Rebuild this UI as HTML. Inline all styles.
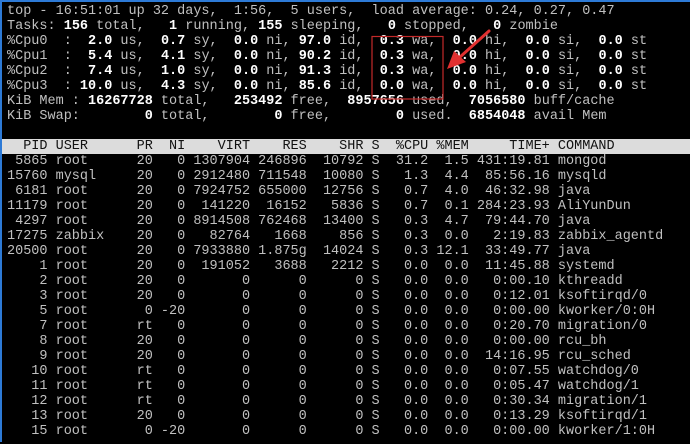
<!DOCTYPE html>
<html><head><meta charset="utf-8"><style>
html,body{margin:0;padding:0;background:#000;}
body{width:690px;height:442px;overflow:hidden;position:relative;border-top:2px solid #2d7ad6;border-left:2px solid #2d7ad6;box-sizing:border-box;}
#t{position:absolute;left:3px;top:2px;font-family:"Liberation Mono",monospace;font-size:13.5px;line-height:15px;color:#c0c0c0;white-space:pre;}
#t div{height:15px;padding-left:2px;}
b{color:#fff;font-weight:bold;}
#t .h{background:#dcdcdc;color:#111;width:700px;margin-left:-3px;padding-left:5px;}
svg{position:absolute;left:0;top:0;}
</style></head><body>
<div id="t"><div>top - 16:51:01 up 32 days,  1:56,  5 users,  load average: 0.24, 0.27, 0.47</div><div>Tasks: <b>156</b> total,   <b>1</b> running, <b>155</b> sleeping,   <b>0</b> stopped,   <b>0</b> zombie</div><div>%Cpu0  : <b> 2.0</b> us, <b> 0.7</b> sy, <b> 0.0</b> ni, <b>97.0</b> id, <b> 0.3</b> wa, <b> 0.0</b> hi, <b> 0.0</b> si, <b> 0.0</b> st</div><div>%Cpu1  : <b> 5.4</b> us, <b> 4.1</b> sy, <b> 0.0</b> ni, <b>90.2</b> id, <b> 0.3</b> wa, <b> 0.0</b> hi, <b> 0.0</b> si, <b> 0.0</b> st</div><div>%Cpu2  : <b> 7.4</b> us, <b> 1.0</b> sy, <b> 0.0</b> ni, <b>91.3</b> id, <b> 0.3</b> wa, <b> 0.0</b> hi, <b> 0.0</b> si, <b> 0.0</b> st</div><div>%Cpu3  : <b>10.0</b> us, <b> 4.3</b> sy, <b> 0.0</b> ni, <b>85.6</b> id, <b> 0.0</b> wa, <b> 0.0</b> hi, <b> 0.0</b> si, <b> 0.0</b> st</div><div>KiB Mem : <b>16267728</b> total, <b>  253492</b> free, <b> 8957656</b> used, <b> 7056580</b> buff/cache</div><div>KiB Swap: <b>       0</b> total, <b>       0</b> free, <b>       0</b> used. <b> 6854048</b> avail Mem</div><div> </div><div class="h">  PID USER      PR  NI    VIRT    RES    SHR S  %CPU %MEM     TIME+ COMMAND</div><div> 5865 root      20   0 1307904 246896  10792 S  31.2  1.5 431:19.81 mongod</div><div>15760 mysql     20   0 2912480 711548  10080 S   1.3  4.4  85:56.16 mysqld</div><div> 6181 root      20   0 7924752 655000  12756 S   0.7  4.0  46:32.98 java</div><div>11179 root      20   0  141220  16152   5836 S   0.7  0.1 284:23.93 AliYunDun</div><div> 4297 root      20   0 8914508 762468  13400 S   0.3  4.7  79:44.70 java</div><div>17275 zabbix    20   0   82764   1668    856 S   0.3  0.0   2:19.83 zabbix_agentd</div><div>20500 root      20   0 7933880 1.875g  14024 S   0.3 12.1  33:49.77 java</div><div>    1 root      20   0  191052   3688   2212 S   0.0  0.0  11:45.88 systemd</div><div>    2 root      20   0       0      0      0 S   0.0  0.0   0:00.10 kthreadd</div><div>    3 root      20   0       0      0      0 S   0.0  0.0   0:12.01 ksoftirqd/0</div><div>    5 root       0 -20       0      0      0 S   0.0  0.0   0:00.00 kworker/0:0H</div><div>    7 root      rt   0       0      0      0 S   0.0  0.0   0:20.70 migration/0</div><div>    8 root      20   0       0      0      0 S   0.0  0.0   0:00.00 rcu_bh</div><div>    9 root      20   0       0      0      0 S   0.0  0.0  14:16.95 rcu_sched</div><div>   10 root      rt   0       0      0      0 S   0.0  0.0   0:07.55 watchdog/0</div><div>   11 root      rt   0       0      0      0 S   0.0  0.0   0:05.47 watchdog/1</div><div>   12 root      rt   0       0      0      0 S   0.0  0.0   0:30.34 migration/1</div><div>   13 root      20   0       0      0      0 S   0.0  0.0   0:13.29 ksoftirqd/1</div><div>   15 root       0 -20       0      0      0 S   0.0  0.0   0:00.00 kworker/1:0H</div></div>
<svg width="690" height="442">
<rect x="370" y="34.5" width="71" height="62.5" fill="none" stroke="#c42a2a" stroke-width="1.2"/>
<line x1="487" y1="29" x2="458" y2="55" stroke="#e03030" stroke-width="3" stroke-linecap="round"/>
<polygon points="445,67 452,49 464,60" fill="#e03030"/>
</svg>
</body></html>
